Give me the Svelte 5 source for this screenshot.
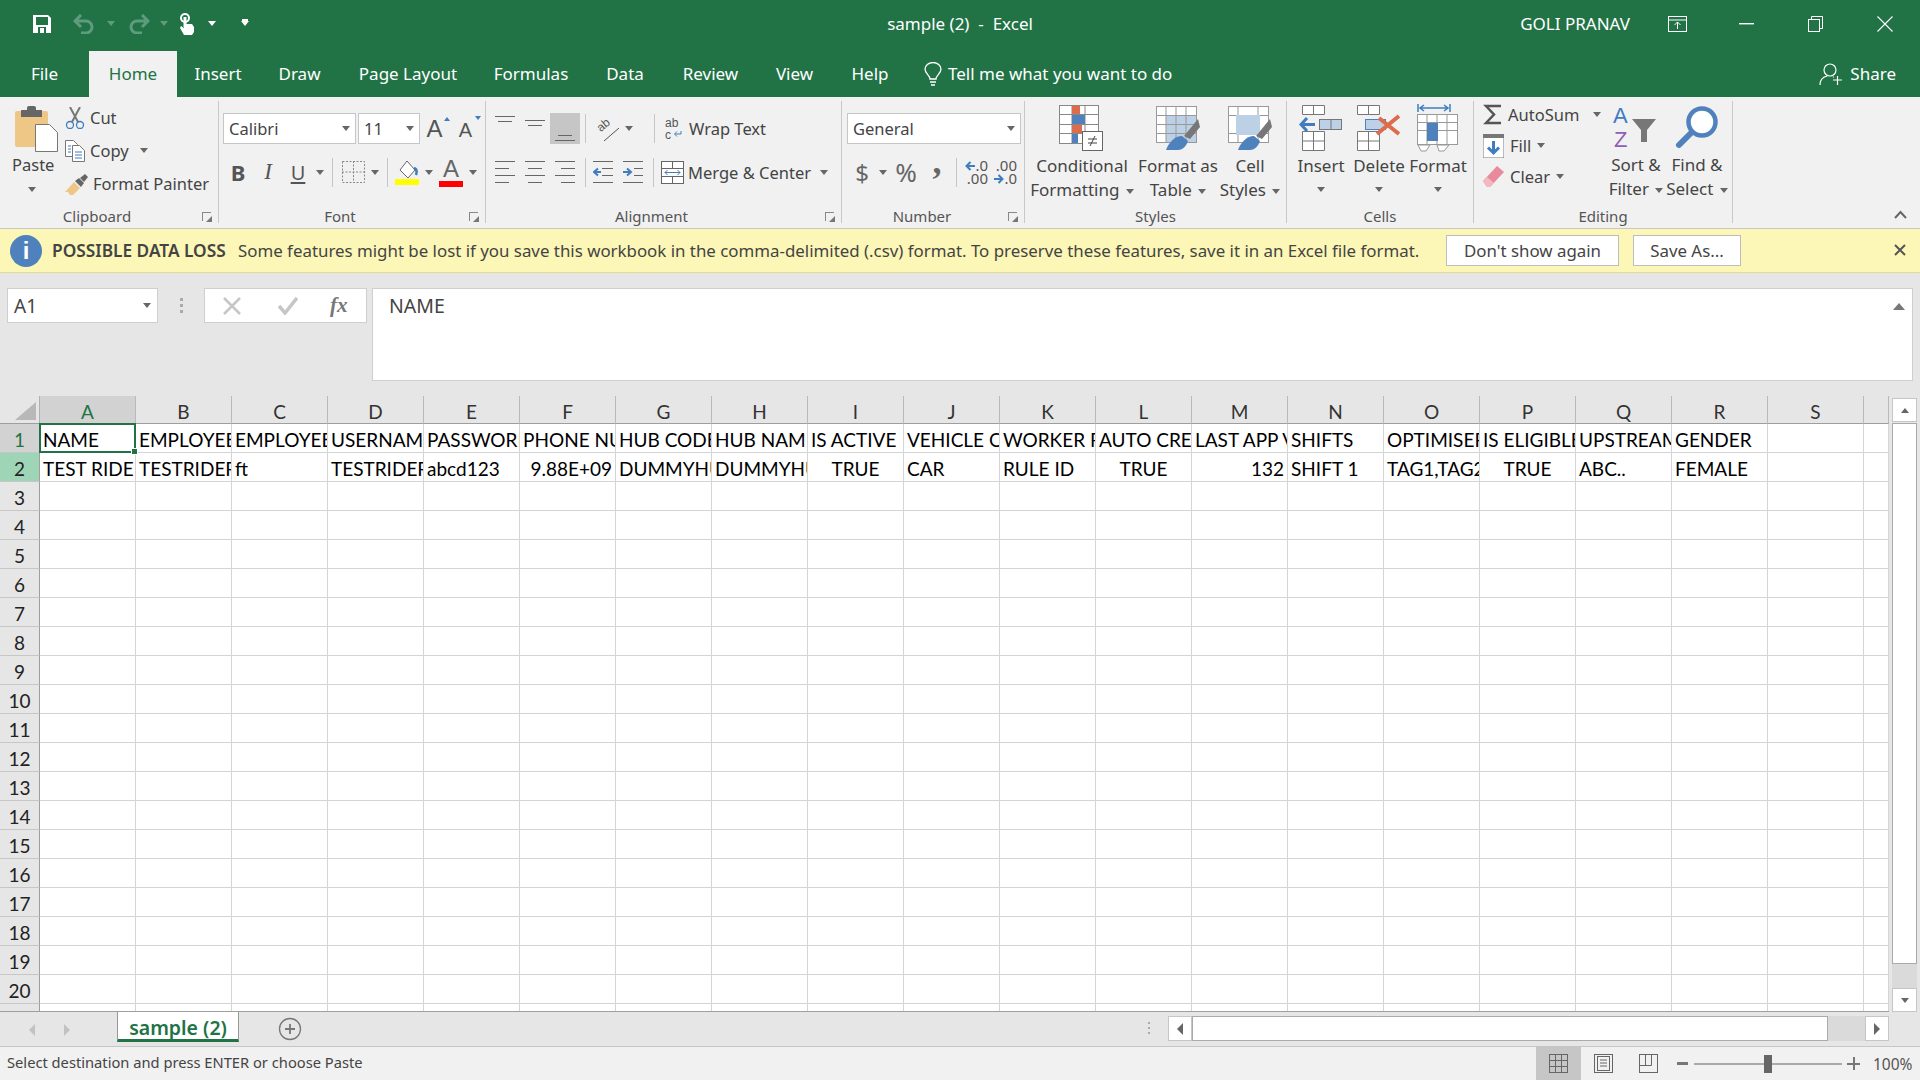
<script>
  const letters = 'ABCDEFGHIJKLMNOPQRS'.split('')
  const header = ['NAME', 'EMPLOYEE ID', 'EMPLOYEE', 'USERNAME', 'PASSWORD', 'PHONE NUMBER', 'HUB CODE', 'HUB NAME', 'IS ACTIVE', 'VEHICLE CATEGORY', 'WORKER RULE', 'AUTO CREATE', 'LAST APP VERSION', 'SHIFTS', 'OPTIMISER TAGS', 'IS ELIGIBLE', 'UPSTREAM', 'GENDER', '']
  const second = ['TEST RIDER', 'TESTRIDER01', 'ft', 'TESTRIDER01', 'abcd123', '9.88E+09', 'DUMMYHUB', 'DUMMYHUB', 'TRUE', 'CAR', 'RULE ID', 'TRUE', '132', 'SHIFT 1', 'TAG1,TAG2', 'TRUE', 'ABC..', 'FEMALE', '']
  const alignOf = { 5: 'right', 8: 'center', 11: 'center', 12: 'right', 15: 'center' }
  const rowNumbers = Array.from({ length: 21 }, (_, i) => i + 1)

  function cellValue(row, col) {
    if (row === 1) return header[col]
    if (row === 2) return second[col]
    return ''
  }
</script>

<div class="app">
  <header class="titlebar">
    <div class="qat">
      <svg class="i-save" width="20" height="20" viewBox="0 0 20 20"><path d="M1 1h15l3 3v15H1z" fill="#fff"/><rect x="4" y="3" width="12" height="8" fill="#217346"/><rect x="6" y="13" width="8" height="6" fill="#217346"/><rect x="8" y="14" width="4" height="5" fill="#fff"/></svg>
      <svg class="i-undo" width="22" height="20" viewBox="0 0 22 20" fill="none" stroke="#5f9c7e" stroke-width="3"><path d="M3 7h10a6 6 0 0 1 0 12H8M8 1L2 7l6 6"/></svg>
      <span class="caret dim c-undo"></span>
      <svg class="i-redo" width="22" height="20" viewBox="0 0 22 20" fill="none" stroke="#5f9c7e" stroke-width="3"><path d="M19 7H9a6 6 0 0 0 0 12h5M14 1l6 6-6 6"/></svg>
      <span class="caret dim c-redo"></span>
      <svg class="i-touch" width="17" height="22" viewBox="0 0 17 22" fill="#fff"><circle cx="7" cy="5" r="4" fill="none" stroke="#fff" stroke-width="2"/><rect x="5.500" y="4" width="3" height="10"/><path d="M6 9h2v2h6l2 3v5l-2 3H6l-4-7 1-2 3 2z"/></svg>
      <span class="caret white c-touch"></span>
      <span class="qat-more"></span>
    </div>
    <div class="doc-title">sample (2)&nbsp; -&nbsp; Excel</div>
    <div class="win">
      <span class="user">GOLI PRANAV</span>
      <svg class="w-ribbon" width="19" height="16" viewBox="0 0 19 16" fill="none" stroke="#fff"><rect x=".5" y=".5" width="18" height="15"/><path d="M1 4h17M9.5 13V6M6.5 9l3-3 3 3"/></svg>
      <svg class="w-min" width="15" height="2" viewBox="0 0 15 2"><rect width="15" height="1.4" fill="#fff"/></svg>
      <svg class="w-max" width="15" height="16" viewBox="0 0 15 16" fill="none" stroke="#fff"><rect x=".5" y="3.5" width="11" height="12"/><path d="M3.5 3V.5h11v12H12"/></svg>
      <svg class="w-close" width="16" height="16" viewBox="0 0 16 16" stroke="#fff" stroke-width="1.1"><path d="M.5.5l15 15M15.500.5l-15 15"/></svg>
    </div>
  </header>

  <nav class="tabs">
    <span class="tab t-file">File</span>
    <span class="tab t-home active">Home</span>
    <span class="tab t-insert">Insert</span>
    <span class="tab t-draw">Draw</span>
    <span class="tab t-layout">Page Layout</span>
    <span class="tab t-formulas">Formulas</span>
    <span class="tab t-data">Data</span>
    <span class="tab t-review">Review</span>
    <span class="tab t-view">View</span>
    <span class="tab t-help">Help</span>
    <svg class="bulb" width="18" height="24" viewBox="0 0 18 24" fill="none" stroke="#fff" stroke-width="1.3"><path d="M6 17c0-4-5-5-5-10a8 6.500 0 0 1 16 0c0 5-5 6-5 10z"/><path d="M6 20h6M7 23h4"/></svg>
    <span class="tell">Tell me what you want to do</span>
    <svg class="person" width="24" height="23" viewBox="0 0 24 23" fill="none" stroke="#fff" stroke-width="1.2"><circle cx="11" cy="7" r="6"/><path d="M1 22c0-5 3-8 7-9M14 14h1M14 17h9M18.500 13v9"/></svg>
    <span class="share">Share</span>
  </nav>

  <section class="ribbon">
    <div class="group g-clip">
      <div class="body clip-body">
        <div class="paste">
          <svg width="43" height="46" viewBox="0 0 43 46"><rect y="5" width="33" height="36" rx="2" fill="#eec786"/><rect x="6" y="4" width="21" height="7" fill="#666"/><rect x="12" y="0" width="9" height="6" rx="2" fill="#666"/><path d="M20.500 18.500h14l8 8v19h-22z" fill="#fff" stroke="#777"/></svg>
          <span class="paste-text">Paste</span>
          <span class="caret"></span>
        </div>
        <div class="clip-list">
          <div class="clip-item">
            <svg width="20" height="22" viewBox="0 0 20 22" fill="none"><path d="M5 0l8 15M15 0L7 15" stroke="#777" stroke-width="2"/><circle cx="5" cy="18" r="3.500" stroke="#3f7cc0" stroke-width="1.300"/><circle cx="15" cy="18" r="3.500" stroke="#3f7cc0" stroke-width="1.300"/></svg>
            <span>Cut</span>
          </div>
          <div class="clip-item">
            <svg width="20" height="22" viewBox="0 0 20 22" fill="#fff" stroke="#777"><path d="M.5.500h8l4 4v12H.5z"/><path d="M7.500 5.500h7l5 5v11h-12z"/><path d="M10 12h7M10 15h7M10 18h7" stroke="#3f7cc0"/><path d="M3 6h3M3 9h3M3 12h3" stroke="#3f7cc0"/></svg>
            <span>Copy</span>
            <span class="caret copy-caret"></span>
          </div>
          <div class="clip-item">
            <svg width="23" height="22" viewBox="0 0 23 22"><path d="M9 9l6 6-7 7H5l-2-3-3 0z" fill="#eec786"/><path d="M10 8l4-3 5 5-3 4zM15 5l5-4 3 3-4 5z" fill="#666"/></svg>
            <span>Format Painter</span>
          </div>
        </div>
      </div>
      <div class="glabel">Clipboard<span class="launch"></span></div>
    </div>

    <div class="group g-font">
      <div class="body">
        <div class="rrow row-a">
          <span class="combo w-font">Calibri<span class="caret"></span></span>
          <span class="combo w-size">11<span class="caret"></span></span>
          <span class="grow-a big">A<i class="tri up"></i></span>
          <span class="grow-a small">A<i class="tri down"></i></span>
        </div>
        <div class="rrow row-b">
          <span class="tb w30 fb">B</span>
          <span class="tb w30 fi">I</span>
          <span class="tb w30 fu">U</span>
          <span class="tb w13"><span class="caret"></span></span>
          <span class="vsep s1"></span>
          <span class="tb w30">
            <svg width="23" height="22" viewBox="0 0 23 22" fill="none" stroke="#888" stroke-dasharray="2 1.500"><rect x=".5" y=".5" width="22" height="21"/><path d="M11.500 0v22M0 11h23"/></svg>
          </span>
          <span class="tb w13"><span class="caret"></span></span>
          <span class="vsep s2"></span>
          <span class="tb w32">
            <svg width="24" height="25" viewBox="0 0 24 25"><path d="M12 1l8 9-7 8-8-8z" fill="#fff" stroke="#666"/><path d="M19 8c3 1 3 4 2 7" stroke="#3f7cc0" stroke-width="2.500" fill="none"/><rect y="19" width="24" height="6" fill="#ff0"/></svg>
          </span>
          <span class="tb w12"><span class="caret"></span></span>
          <span class="tb w32 fcolor">A<i></i></span>
          <span class="tb w12"><span class="caret"></span></span>
        </div>
      </div>
      <div class="glabel">Font<span class="launch"></span></div>
    </div>

    <div class="group g-align">
      <div class="body">
        <div class="rrow row-a">
          <span class="tb w30 al">
            <svg width="20" height="14" viewBox="0 0 20 14" stroke="#666"><path d="M0 .5h20M3 5.500h14"/></svg>
          </span>
          <span class="tb w30 al">
            <svg width="20" height="14" viewBox="0 0 20 14" stroke="#666"><path d="M0 4.500h20M3 9.500h14"/></svg>
          </span>
          <span class="tb w30 sel">
            <svg width="20" height="14" viewBox="0 0 20 14" stroke="#666"><path d="M3 8.500h14M0 13.500h20"/></svg>
          </span>
          <span class="vsep s3"></span>
          <span class="tb w30 orient">
            <svg width="24" height="26" viewBox="0 0 24 26" fill="none" stroke="#555"><path d="M8 25L23 12"/><text x="1" y="14" font-size="12" fill="#555" stroke="none" font-family="Liberation Sans" transform="rotate(-40 6 10)">ab</text></svg>
          </span>
          <span class="tb w12"><span class="caret"></span></span>
          <span class="vsep s4"></span>
          <svg class="i-wrap" width="19" height="24" viewBox="0 0 19 24"><text x="0" y="10" font-size="12" fill="#555" font-family="Liberation Sans">ab</text><text x="0" y="22" font-size="12" fill="#555" font-family="Liberation Sans">c</text><path d="M16 14v3h-6M12 14.500l-2.500 2.500 2.500 2.500" fill="none" stroke="#3f7cc0"/></svg>
          <span class="wide">Wrap Text</span>
        </div>
        <div class="rrow row-b">
          {#each [0, 3, 6] as offset}
            <span class="tb w30">
              <svg width="20" height="22" viewBox="0 0 20 22" stroke="#666"><path d="M0 .5h20M{offset} 7.500h14M0 14.500h20M{offset} 21.500h14"/></svg>
            </span>
          {/each}
          <span class="vsep s3"></span>
          <svg class="i-ind" width="20" height="22" viewBox="0 0 20 22" fill="none" stroke="#666"><path d="M0 .5h20M9 7.500h11M9 14.500h11M0 21.500h20"/><path d="M8 11H2M5 7.500L1 11l4 3.500" stroke="#3f7cc0" stroke-width="2"/></svg>
          <svg class="i-ind2" width="20" height="22" viewBox="0 0 20 22" fill="none" stroke="#666"><path d="M0 .5h20M11 7.500h9M11 14.500h9M0 21.500h20"/><path d="M0 11h7M4 7.500L8 11l-4 3.500" stroke="#3f7cc0" stroke-width="2"/></svg>
          <span class="vsep s5"></span>
          <svg class="i-merge" width="23" height="23" viewBox="0 0 23 23" fill="#fff" stroke="#666"><rect x=".5" y=".5" width="22" height="22"/><path d="M0 7.500h23M0 15.500h23M11.500 0v7M11.500 16v7"/><path d="M4 11.500h15M6.500 9L4 11.500 6.500 14M16.500 9l2.500 2.500-2.500 2.500" stroke="#3f7cc0"/></svg>
          <span class="wide">Merge &amp; Center</span>
          <span class="caret merge-caret"></span>
        </div>
      </div>
      <div class="glabel">Alignment<span class="launch"></span></div>
    </div>

    <div class="group g-num">
      <div class="body">
        <div class="rrow row-a">
          <span class="combo w-general">General<span class="caret"></span></span>
        </div>
        <div class="rrow row-b">
          <span class="num dollar">$</span>
          <span class="tb w13"><span class="caret"></span></span>
          <span class="num pct">%</span>
          <span class="num comma">,</span>
          <span class="vsep s6"></span>
          <span class="dec">
            <span class="decl"><svg width="10" height="10" viewBox="0 0 10 10" fill="none" stroke="#3f7cc0" stroke-width="2"><path d="M10 5H2M5.500 1L1.500 5l4 4"/></svg>.0</span>
            <span>.00</span>
          </span>
          <span class="dec second">
            <span>.00</span>
            <span class="decl"><svg width="10" height="10" viewBox="0 0 10 10" fill="none" stroke="#3f7cc0" stroke-width="2"><path d="M0 5h8M4.500 1l4 4-4 4"/></svg>.0</span>
          </span>
        </div>
      </div>
      <div class="glabel">Number<span class="launch"></span></div>
    </div>

    <div class="group g-styles">
      <div class="body big-row">
        <div class="bigbtn w-cond">
          <svg class="icon" width="46" height="46" viewBox="0 0 46 46" fill="#fff" stroke="#888"><rect x=".5" y=".5" width="39" height="38"/><path d="M0 9.500h40M0 19.500h40M0 28.500h40M13 0v39M26 0v39"/><rect x="13" y="1" width="8" height="8" fill="#dd6b4c" stroke="none"/><rect x="13" y="10" width="13" height="9" fill="#4f81bd" stroke="none"/><rect x="13" y="20" width="10" height="8" fill="#dd6b4c" stroke="none"/><rect x="13" y="29" width="6" height="9" fill="#4f81bd" stroke="none"/><rect x="23.500" y="26.500" width="20" height="19" fill="#fff" stroke="#666"/><path d="M29 34h9M29 38h9M36 31l-5 10" stroke="#444"/></svg>
          <span class="l2">Conditional</span>
          <span class="l2">Formatting <i class="caret"></i></span>
        </div>
        <div class="bigbtn w-ftable">
          <svg class="icon" width="44" height="44" viewBox="0 0 44 44" fill="#fff" stroke="#999"><rect x=".5" y=".5" width="40" height="36"/><rect x="10" y="9" width="30" height="27" fill="#bdd1e6" stroke="none"/><path d="M0 9.500h41M0 18.500h41M0 27.500h41M10 0v37M20 0v37M30 0v37"/><path d="M28 30l14-17 2 8-10 12z" fill="#777" stroke="none"/><path d="M10 44c2-6 8-14 16-14l6 5c-2 6-6 9-10 9z" fill="#4f81bd" stroke="none"/></svg>
          <span class="l2">Format as</span>
          <span class="l2">Table <i class="caret"></i></span>
        </div>
        <div class="bigbtn w-cstyle">
          <svg class="icon" width="44" height="44" viewBox="0 0 44 44" fill="#fff" stroke="#999"><rect x=".5" y=".5" width="40" height="36"/><path d="M0 9.500h41M0 27.500h41M10 0v37M30 0v37"/><rect x="8" y="9" width="24" height="20" fill="#bdd1e6" stroke="none"/><path d="M28 30l14-17 2 8-10 12z" fill="#777" stroke="none"/><path d="M10 44c2-6 8-14 16-14l6 5c-2 6-6 9-10 9z" fill="#4f81bd" stroke="none"/></svg>
          <span class="l2">Cell</span>
          <span class="l2">Styles <i class="caret"></i></span>
        </div>
      </div>
      <div class="glabel">Styles</div>
    </div>

    <div class="group g-cells">
      <div class="body big-row">
        <div class="bigbtn w-insert">
          <svg class="icon" width="44" height="46" viewBox="0 0 44 46" fill="#fff" stroke="#777"><path d="M3.500.5h22v9h-22zM14.500 0v9M3.500 26.500h22v19h-22zM14.500 26v19M3 36h23"/><rect x="20.500" y="14.500" width="22" height="10" fill="#bdd1e6"/><path d="M32 15v9"/><path d="M16 19.500H2M8 13l-6 6.500 6 6.500" fill="none" stroke="#3f7cc0" stroke-width="3"/></svg>
          <span class="l2">Insert</span>
          <i class="caret"></i>
        </div>
        <div class="bigbtn w-delete">
          <svg class="icon" width="44" height="46" viewBox="0 0 44 46" fill="#fff" stroke="#777"><path d="M.5.500h22v9H.5zM11.500 0v9M.5 26.500h22v19H.5zM11.500 26v19M0 36h23"/><rect x="8.500" y="14.500" width="20" height="10" fill="#bdd1e6" stroke="#4f81bd"/><path d="M22 13l20 16M42 11L20 29" fill="none" stroke="#dd6b4c" stroke-width="4"/></svg>
          <span class="l2">Delete</span>
          <i class="caret"></i>
        </div>
        <div class="bigbtn w-format">
          <svg class="icon" width="42" height="48" viewBox="0 0 42 48" fill="#fff" stroke="#999"><path d="M1 0v8M33 0v8M3 4h28M7 1L3 4l4 3M27 1l4 3-4 3" fill="none" stroke="#3f7cc0" stroke-width="1.500"/><rect x=".5" y="10.500" width="40" height="30"/><path d="M0 18.500h41M0 26.500h41M10 10v31M20 10v31M30 10v31"/><rect x="10" y="19" width="11" height="18" fill="#4f81bd" stroke="none"/><path d="M1 41h12l-4 6H4zM20 41h12l-5 6h-5z"/></svg>
          <span class="l2">Format</span>
          <i class="caret"></i>
        </div>
      </div>
      <div class="glabel">Cells</div>
    </div>

    <div class="group g-edit">
      <div class="body edit-body">
        <div class="edit-list">
          <div class="edit-item">
            <svg width="19" height="21" viewBox="0 0 19 21" fill="none" stroke="#555" stroke-width="2.500"><path d="M18 2H3l8 8.500L3 19h15"/></svg>
            <span class="auto">AutoSum</span>
            <i class="caret auto-caret"></i>
          </div>
          <div class="edit-item">
            <svg width="21" height="24" viewBox="0 0 21 24"><rect width="21" height="24" fill="#fff" stroke="#777"/><rect width="21" height="4" fill="#777"/><path d="M10.500 7v12M5 13.500l5.500 5.500 5.500-5.500" fill="none" stroke="#3f7cc0" stroke-width="3"/></svg>
            <span>Fill</span>
            <i class="caret"></i>
          </div>
          <div class="edit-item">
            <svg width="21" height="21" viewBox="0 0 21 21"><path d="M0 15L14 0l7 6L7 21H4z" fill="#e98a9c"/><path d="M0 15l4-4 7 6-4 4H4z" fill="#f3b8c2"/></svg>
            <span>Clear</span>
            <i class="caret"></i>
          </div>
        </div>
        <div class="bigbtn w-sort">
          <svg class="icon" width="46" height="42" viewBox="0 0 46 42"><text x="0" y="17" font-size="22" fill="#3f7cc0" font-family="Liberation Sans">A</text><text x="1" y="41" font-size="22" fill="#8e5fb8" font-family="Liberation Sans">Z</text><path d="M19 13h24L34 24v12h-6V24z" fill="#777"/></svg>
          <span class="l2">Sort &amp;</span>
          <span class="l2">Filter <i class="caret"></i></span>
        </div>
        <div class="bigbtn w-find">
          <svg class="icon" width="42" height="42" viewBox="0 0 42 42" fill="none" stroke="#4f81bd"><circle cx="26" cy="16" r="13.500" stroke-width="4.500" fill="#fff"/><path d="M15 27L3 39" stroke-width="6" stroke-linecap="round"/></svg>
          <span class="l2">Find &amp;</span>
          <span class="l2">Select <i class="caret"></i></span>
        </div>
      </div>
      <div class="glabel">Editing</div>
    </div>

    <svg class="collapse" width="13" height="9" viewBox="0 0 13 9" fill="none" stroke="#666" stroke-width="2"><path d="M1 8l5.500-6L12 8"/></svg>
  </section>

  <div class="msgbar">
    <span class="info">i</span>
    <b>POSSIBLE DATA LOSS</b>
    <span class="msg">Some features might be lost if you save this workbook in the comma-delimited (.csv) format. To preserve these features, save it in an Excel file format.</span>
    <button class="btn-dont">Don't show again</button>
    <button class="btn-save">Save As...</button>
    <svg class="msg-close" width="12" height="12" viewBox="0 0 12 12" stroke="#555" stroke-width="2"><path d="M1 1l10 10M11 1L1 11"/></svg>
  </div>

  <div class="formula">
    <div class="namebox">A1<span class="caret"></span></div>
    <div class="dots"><i></i><i></i><i></i></div>
    <div class="fxbox">
      <svg width="18" height="18" viewBox="0 0 18 18" stroke="#c6c6c6" stroke-width="2.500"><path d="M1 1l16 16M17 1L1 17"/></svg>
      <svg width="20" height="18" viewBox="0 0 20 18" fill="none" stroke="#c6c6c6" stroke-width="3.500"><path d="M1 9l6 7L19 1"/></svg>
      <span class="fx">fx</span>
    </div>
    <div class="finput">NAME
      <svg class="f-up" width="12" height="7" viewBox="0 0 12 7"><path d="M0 7l6-7 6 7z" fill="#777"/></svg>
    </div>
  </div>

  <div class="sheet">
    <div class="grid">
      <div class="corner">
        <svg width="21" height="18" viewBox="0 0 21 18"><path d="M21 0v18H0z" fill="#b8b8b8"/></svg>
      </div>
      {#each letters as l, i}
        <div class="ch" class:on={i === 0}>{l}</div>
      {/each}
      <div class="ch"></div>
      {#each rowNumbers as r}
        <div class="rh" class:on={r === 1} class:paste-row={r === 2}>{r < 21 ? r : ''}</div>
        {#each letters as l, c}
          <div class="cell {r === 2 && alignOf[c] ? alignOf[c] : ''}">
            <span class="val">{cellValue(r, c)}</span>
            {#if r === 1 && c === 0}
              <span class="selbox"></span>
            {/if}
          </div>
        {/each}
        <div class="cell"></div>
      {/each}
    </div>
    <div class="vscroll">
      <span class="sbtn"><i class="caret up-c"></i></span>
      <span class="thumb"></span>
      <span class="sbtn down"><i class="caret"></i></span>
    </div>
  </div>

  <div class="tabbar">
    <span class="nav-l"></span>
    <span class="nav-r"></span>
    <span class="sheet-tab">sample (2)</span>
    <svg class="addsheet" width="24" height="24" viewBox="0 0 24 24" fill="none" stroke="#777" stroke-width="1.300"><circle cx="12" cy="12" r="10.500"/><path d="M12 7v10M7 12h10" stroke-width="1.800"/></svg>
    <div class="dots small"><i></i><i></i><i></i></div>
    <div class="hscroll">
      <span class="hbtn"><i class="arrow left"></i></span>
      <span class="hthumb"></span>
      <span class="hbtn end"><i class="arrow right"></i></span>
    </div>
  </div>

  <footer class="status">
    <span>Select destination and press ENTER or choose Paste</span>
    <div class="views">
      <span class="view on">
        <svg width="19" height="19" viewBox="0 0 19 19" fill="none" stroke="#666"><rect x=".5" y=".5" width="18" height="18"/><path d="M0 6.500h19M0 12.500h19M6.500 0v19M12.500 0v19"/></svg>
      </span>
      <span class="view">
        <svg width="19" height="19" viewBox="0 0 19 19" fill="none" stroke="#666"><rect x=".5" y=".5" width="18" height="18"/><rect x="3.500" y="2.500" width="12" height="14"/><path d="M6 6h7M6 9h7M6 12h7"/></svg>
      </span>
      <span class="view">
        <svg width="19" height="19" viewBox="0 0 19 19" fill="none" stroke="#666"><rect x=".5" y=".5" width="18" height="18"/><path d="M0 11.500h12.500V0M6.500 0v11"/></svg>
      </span>
    </div>
    <div class="zoom">
      <span class="z-minus"></span>
      <span class="z-track"><i></i></span>
      <span class="z-plus"></span>
      <span class="z-pct">100%</span>
    </div>
  </footer>
</div>

<style>
  :global(body) {
    margin: 0;
    background: #e6e6e6;
  }
  .app {
    width: 1920px;
    height: 1080px;
    overflow: hidden;
    display: flex;
    flex-direction: column;
    font-family: 'Noto Sans', sans-serif;
    font-size: 16.5px;
    color: #444;
    --green: #217346;
  }
  svg {
    display: block;
    flex: none;
  }
  .caret {
    display: inline-block;
    width: 0;
    height: 0;
    border: 4px solid transparent;
    border-top: 5px solid #666;
    border-bottom: 0;
    flex: none;
  }
  .caret.dim {
    border-top-color: #5f9c7e;
  }
  .caret.white {
    border-top-color: #fff;
  }

  /* title bar */
  .titlebar {
    height: 51px;
    box-sizing: border-box;
    padding-bottom: 4px;
    background: var(--green);
    color: #fff;
    display: grid;
    grid-template-columns: 1fr auto 1fr;
    align-items: center;
    font-size: 17px;
  }
  .qat {
    display: flex;
    align-items: center;
    padding-left: 32px;
  }
  .i-undo {
    margin-left: 21px;
  }
  .c-undo {
    margin-left: 12px;
  }
  .i-redo {
    margin-left: 13px;
  }
  .c-redo {
    margin-left: 10px;
  }
  .i-touch {
    margin-left: 10px;
  }
  .c-touch {
    margin-left: 13px;
  }
  .qat-more {
    margin-left: 25px;
    width: 0;
    height: 0;
    border: 4px solid transparent;
    border-top: 5px solid #fff;
    border-bottom: 0;
    box-shadow: 0 -3px 0 -1px #fff;
  }
  .doc-title {
    white-space: nowrap;
  }
  .win {
    display: flex;
    align-items: center;
    justify-content: flex-end;
    padding-right: 27px;
  }
  .user {
    margin-right: 38px;
  }
  .w-min {
    margin-left: 52px;
  }
  .w-max {
    margin-left: 54px;
  }
  .w-close {
    margin-left: 54px;
  }

  /* tabs */
  .tabs {
    height: 46px;
    background: var(--green);
    color: #fff;
    display: flex;
    align-items: stretch;
    font-size: 17px;
  }
  .tab {
    display: flex;
    align-items: center;
    justify-content: center;
    padding-bottom: 2px;
    box-sizing: border-box;
  }
  .tab.active {
    background: #f1f1f1;
    color: var(--green);
  }
  .t-file { width: 89px; }
  .t-home { width: 88px; }
  .t-insert { width: 82px; }
  .t-draw { width: 81px; }
  .t-layout { width: 136px; }
  .t-formulas { width: 110px; }
  .t-data { width: 78px; }
  .t-review { width: 93px; }
  .t-view { width: 75px; }
  .t-help { width: 76px; }
  .bulb {
    align-self: center;
    margin-left: 16px;
  }
  .tell {
    align-self: center;
    margin: 0 0 2px 6px;
  }
  .person {
    align-self: center;
    margin-left: auto;
  }
  .share {
    align-self: center;
    margin: 0 24px 2px 7px;
  }

  /* ribbon */
  .ribbon {
    height: 132px;
    box-sizing: border-box;
    background: #f1f1f1;
    border-bottom: 1px solid #c6c6c6;
    padding: 4px 0 5px;
    display: flex;
    position: relative;
  }
  .group {
    box-sizing: border-box;
    border-right: 1px solid #c8c8c8;
    display: flex;
    flex-direction: column;
  }
  .g-clip { width: 219px; }
  .g-font { width: 267px; }
  .g-align { width: 356px; }
  .g-num { width: 183px; }
  .g-styles { width: 262px; }
  .g-cells { width: 187px; }
  .g-edit { width: 259px; }
  .body {
    flex: 1;
    min-height: 0;
  }
  .glabel {
    height: 22px;
    font-size: 15px;
    line-height: 22px;
    text-align: center;
    position: relative;
    top: 4px;
    margin-top: -4px;
    color: #555;
  }
  .g-clip .glabel,
  .g-font .glabel {
    padding-right: 24px;
  }
  .g-align .glabel {
    padding-right: 24px;
  }
  .g-num .glabel {
    padding-right: 22px;
  }
  .launch {
    position: absolute;
    right: 7px;
    top: 7px;
    width: 8px;
    height: 8px;
    border-left: 1px solid #888;
    border-top: 1px solid #888;
  }
  .launch::after {
    content: '';
    position: absolute;
    right: -1px;
    bottom: -1px;
    border: 3px solid #777;
    border-left-color: transparent;
    border-top-color: transparent;
  }

  /* clipboard */
  .clip-body {
    display: flex;
  }
  .paste {
    width: 65px;
    box-sizing: border-box;
    padding: 5px 0 0 15px;
    display: flex;
    flex-direction: column;
    align-items: flex-start;
  }
  .paste-text {
    width: 42px;
    margin-left: -3px;
    text-align: center;
    height: 26px;
    line-height: 26px;
  }
  .paste .caret {
    margin: 9px 0 0 13px;
  }
  .clip-item {
    height: 33px;
    display: flex;
    align-items: center;
    gap: 5px;
    white-space: nowrap;
  }
  .copy-caret {
    margin-left: 6px;
  }

  /* shared ribbon rows */
  .rrow {
    display: flex;
    align-items: center;
  }
  .row-a {
    height: 31px;
    margin-top: 12px;
  }
  .row-b {
    height: 30px;
    margin-top: 13px;
  }
  .g-font .rrow {
    padding-left: 4px;
  }
  .combo {
    box-sizing: border-box;
    height: 31px;
    background: #fff;
    border: 1px solid #c6c6c6;
    display: flex;
    align-items: center;
    justify-content: space-between;
    padding: 0 5px;
    color: #444;
  }
  .w-font { width: 133px; margin-right: 2px; }
  .w-size { width: 62px; }
  .w-general { width: 174px; margin-left: 5px; }
  .grow-a {
    position: relative;
    width: 31px;
    text-align: center;
    color: #555;
    font-family: 'Liberation Sans', sans-serif;
  }
  .grow-a.big {
    font-size: 24px;
    margin-left: -1px;
  }
  .grow-a.small {
    font-size: 20px;
    padding-top: 4px;
  }
  .tri {
    position: absolute;
    right: 0;
    border: 3.500px solid transparent;
  }
  .tri.up {
    top: 2px;
    border-bottom: 4px solid #3f7cc0;
    border-top: 0;
  }
  .tri.down {
    top: 1px;
    border-top: 4px solid #3f7cc0;
    border-bottom: 0;
  }
  .tb {
    display: flex;
    align-items: center;
    justify-content: center;
    height: 31px;
    color: #555;
    flex: none;
  }
  .w30 { width: 30px; }
  .w32 { width: 32px; }
  .w13 { width: 13px; }
  .w12 { width: 12px; }
  .fb {
    font: bold 22px 'Noto Sans', sans-serif;
  }
  .fi {
    font: italic 23px 'Liberation Serif', serif;
  }
  .fu {
    font: 20px 'Noto Sans', sans-serif;
    text-decoration: underline;
    text-underline-offset: 2px;
  }
  .fcolor {
    flex-direction: column;
    font: 24px/24px 'Liberation Sans', sans-serif;
    color: #666;
  }
  .fcolor i {
    width: 24px;
    height: 6px;
    background: #f00;
  }
  .vsep {
    width: 1px;
    height: 29px;
    background: #c6c6c6;
    flex: none;
  }
  .s1 { margin: 0 5px 0 6px; }
  .s2 { margin: 0 3px 0 6px; }
  .s3 { margin: 0 7px 0 5px; }
  .s4 { margin: 0 10px 0 19px; }
  .s5 { margin: 0 7px 0 10px; }
  .s6 { margin: 0 7px 0 12px; }
  .g-align .rrow > .tb:first-child {
    margin-left: 4px;
  }
  .sel {
    background: #c6c6c6;
  }
  .al svg,
  .sel svg {
    align-self: flex-start;
    margin-top: 3px;
  }
  .sel svg {
    margin-top: 14px;
    height: 14px;
  }
  .i-wrap {
    margin-right: 5px;
  }
  .wide {
    white-space: nowrap;
  }
  .i-ind {
    margin-right: 10px;
  }
  .i-merge {
    margin-right: 4px;
  }
  .merge-caret {
    margin-left: 9px;
  }
  .g-num .row-b {
    padding-left: 12px;
    color: #666;
  }
  .num {
    flex: none;
    text-align: center;
    color: #666;
  }
  .dollar {
    width: 16px;
    font-size: 24px;
    margin-right: 6px;
  }
  .pct {
    width: 24px;
    font-size: 26px;
    margin-left: 5px;
  }
  .comma {
    width: 14px;
    font: bold 36px/20px 'Liberation Serif', serif;
    margin: -22px 0 0 12px;
  }
  .dec {
    display: flex;
    flex-direction: column;
    align-items: flex-end;
    font-size: 15px;
    line-height: 13px;
    width: 24px;
    color: #555;
  }
  .decl {
    display: flex;
    align-items: center;
  }
  .dec.second {
    width: 21px;
    margin-left: 8px;
  }

  /* large buttons */
  .big-row {
    display: flex;
    padding-top: 1px;
  }
  .bigbtn {
    display: flex;
    flex-direction: column;
    align-items: center;
    flex: none;
    white-space: nowrap;
    font-size: 17px;
  }
  .bigbtn .icon {
    height: 52px;
    margin-bottom: 0;
    overflow: visible;
  }
  .l2 {
    height: 24px;
    line-height: 24px;
  }
  .bigbtn > .caret {
    margin-top: 9px;
  }
  .l2 .caret {
    vertical-align: 2px;
    margin-left: 2px;
  }
  .w-cond { width: 114px; }
  .w-ftable { width: 78px; }
  .w-cstyle { width: 66px; }
  .w-insert { width: 66px; margin-left: 1px; }
  .w-delete { width: 50px; }
  .w-format { width: 68px; }

  /* editing */
  .edit-body {
    display: flex;
  }
  .edit-list {
    width: 135px;
    margin-top: -2px;
    padding: 0 0 0 9px;
    box-sizing: border-box;
  }
  .edit-item {
    height: 31px;
    display: flex;
    align-items: center;
    gap: 6px;
    white-space: nowrap;
  }
  .auto-caret {
    margin-left: 8px;
  }
  .w-sort {
    width: 54px;
  }
  .w-find {
    width: 64px;
    margin-left: 2px;
  }

  .collapse {
    position: absolute;
    right: 13px;
    bottom: 9px;
  }

  /* message bar */
  .msgbar {
    height: 44px;
    box-sizing: border-box;
    background: #fcf7b6;
    border-bottom: 1px solid #e4dc95;
    display: flex;
    align-items: center;
    position: relative;
    font-size: 16.88px;
  }
  .info {
    width: 32px;
    height: 32px;
    border-radius: 50%;
    background: #4f81bd;
    color: #fff;
    margin-left: 10px;
    text-align: center;
    font: bold 24px/32px 'Liberation Sans', sans-serif;
    flex: none;
  }
  .msgbar b {
    margin-left: 10px;
    width: 176px;
    flex: none;
    font-size: 17.3px;
    font-weight: 600;
    white-space: nowrap;
  }
  .msg {
    margin-left: 10px;
    white-space: nowrap;
    width: 1208px;
    flex: none;
  }
  .msgbar button {
    box-sizing: border-box;
    height: 31px;
    background: #fff;
    border: 1px solid #bdbdbd;
    font: inherit;
    color: #444;
    padding: 0;
  }
  .btn-dont {
    width: 173px;
  }
  .btn-save {
    width: 108px;
    margin-left: 14px;
  }
  .msg-close {
    position: absolute;
    right: 14px;
    top: 15px;
  }

  /* formula bar */
  .formula {
    height: 123px;
    box-sizing: border-box;
    background: #e6e6e6;
    padding: 15px 7px 15px 7px;
    display: flex;
    align-items: flex-start;
  }
  .namebox {
    box-sizing: border-box;
    width: 151px;
    height: 35px;
    background: #fff;
    border: 1px solid #cfcfcf;
    font-size: 19px;
    display: flex;
    align-items: center;
    justify-content: space-between;
    padding: 0 6px;
  }
  .dots {
    display: flex;
    flex-direction: column;
    gap: 3px;
    width: 46px;
    height: 35px;
    align-items: center;
    justify-content: center;
  }
  .dots i {
    width: 3px;
    height: 3px;
    background: #aaa;
  }
  .fxbox {
    box-sizing: border-box;
    width: 163px;
    height: 35px;
    background: #fff;
    border: 1px solid #cfcfcf;
    display: flex;
    align-items: center;
    padding-left: 18px;
    gap: 37px;
  }
  .fx {
    font: italic bold 21px 'Liberation Serif', serif;
    color: #777;
    margin-left: -5px;
  }
  .finput {
    box-sizing: border-box;
    margin-left: 5px;
    flex: 1;
    height: 93px;
    background: #fff;
    border: 1px solid #cfcfcf;
    font-size: 19.5px;
    padding: 3px 16px;
    position: relative;
  }
  .f-up {
    position: absolute;
    right: 7px;
    top: 14px;
  }

  /* sheet */
  .sheet {
    height: 616px;
    display: flex;
    background: #e6e6e6;
  }
  .grid {
    width: 1889px;
    box-sizing: border-box;
    height: 616px;
    overflow: hidden;
    display: grid;
    grid-template-columns: 40px repeat(19, 96px) 25px;
    grid-auto-rows: 29px;
    grid-template-rows: 28px;
    border-bottom: 1px solid #9e9e9e;
    font: 19px 'Lato', sans-serif;
    color: #000;
  }
  .corner {
    background: #e6e6e6;
    border-right: 1px solid #b0b0b0;
    border-bottom: 1px solid #9e9e9e;
    box-sizing: border-box;
    display: flex;
    justify-content: flex-end;
    align-items: flex-end;
    padding: 0 3px 3px 0;
  }
  .ch {
    box-sizing: border-box;
    background: #e6e6e6;
    border-right: 1px solid #b9b9b9;
    border-bottom: 1px solid #9e9e9e;
    text-align: center;
    line-height: 31px;
    color: #333;
  }
  .ch.on {
    background: #d2d2d2;
    color: var(--green);
  }
  .rh {
    box-sizing: border-box;
    background: #e6e6e6;
    border-right: 1px solid #9e9e9e;
    border-bottom: 1px solid #c6c6c6;
    text-align: center;
    line-height: 31px;
    color: #222;
  }
  .rh.on {
    background: #d2d2d2;
    color: var(--green);
  }
  .rh.paste-row {
    background: #9fd5b7;
  }
  .cell {
    box-sizing: border-box;
    background: #fff;
    border-right: 1px solid #d4d4d4;
    border-bottom: 1px solid #d4d4d4;
    position: relative;
  }
  .val {
    display: block;
    line-height: 31px;
    height: 28px;
    padding: 0 3px;
    white-space: nowrap;
    overflow: hidden;
  }
  .cell.right {
    text-align: right;
  }
  .cell.center {
    text-align: center;
  }
  .selbox {
    position: absolute;
    inset: -1px -1px -1px -1px;
    border: 2px solid var(--green);
    z-index: 2;
    pointer-events: none;
  }
  .selbox::after {
    content: '';
    position: absolute;
    right: -4px;
    bottom: -4px;
    width: 5px;
    height: 5px;
    background: var(--green);
    border: 1px solid #fff;
  }
  .vscroll {
    width: 31px;
    box-sizing: border-box;
    padding: 2px 3px 0;
    display: flex;
    flex-direction: column;
    align-items: stretch;
  }
  .sbtn {
    box-sizing: border-box;
    height: 24px;
    background: #fff;
    border: 1px solid #c6c6c6;
    display: flex;
    align-items: center;
    justify-content: center;
    flex: none;
  }
  .up-c {
    transform: rotate(180deg);
  }
  .thumb {
    box-sizing: border-box;
    height: 541px;
    margin-top: 1px;
    background: #fff;
    border: 1px solid #aaa;
    flex: none;
  }
  .sbtn.down {
    margin-top: 24px;
    box-shadow: 0 -24px 0 0 #dadada;
  }

  /* sheet tabs */
  .tabbar {
    height: 35px;
    box-sizing: border-box;
    background: #e6e6e6;
    border-bottom: 1px solid #c6c6c6;
    display: flex;
    position: relative;
  }
  .nav-l,
  .nav-r {
    width: 0;
    height: 0;
    border: 6px solid transparent;
    margin-top: 12px;
  }
  .nav-l {
    border-right: 6px solid #c2c2c2;
    border-left: 0;
    margin-left: 29px;
  }
  .nav-r {
    border-left: 6px solid #c2c2c2;
    border-right: 0;
    margin-left: 29px;
  }
  .sheet-tab {
    box-sizing: border-box;
    width: 122px;
    height: 30px;
    margin-left: 47px;
    background: #fff;
    border: 1px solid #999;
    border-top: 0;
    border-bottom: 3px solid var(--green);
    text-align: center;
    font-weight: 600;
    line-height: 31px;
    color: var(--green);
    font-size: 19.5px;
    white-space: nowrap;
  }
  .addsheet {
    margin: 5px 0 0 39px;
  }
  .dots.small {
    height: 32px;
    width: 24px;
    margin-left: 835px;
  }
  .dots.small i {
    width: 2px;
    height: 2px;
  }
  .hscroll {
    display: flex;
    margin: 4px 0 0 7px;
    width: 721px;
    height: 25px;
    background: #dadada;
  }
  .hbtn {
    box-sizing: border-box;
    width: 24px;
    height: 25px;
    background: #fff;
    border: 1px solid #c6c6c6;
    display: flex;
    align-items: center;
    justify-content: center;
    flex: none;
  }
  .hbtn.end {
    margin-left: auto;
  }
  .hthumb {
    box-sizing: border-box;
    width: 636px;
    background: #fff;
    border: 1px solid #aaa;
    flex: none;
  }
  .arrow {
    border: 6px solid transparent;
  }
  .arrow.left {
    border-right: 6px solid #666;
    border-left: 0;
  }
  .arrow.right {
    border-left: 6px solid #666;
    border-right: 0;
  }

  /* status bar */
  .status {
    flex: 1;
    background: #f1f1f1;
    display: flex;
    align-items: center;
    padding-left: 7px;
    font-size: 14.7px;
    color: #444;
  }
  .status > span {
    margin-top: -3px;
  }
  .views {
    display: flex;
    margin-left: auto;
    align-self: stretch;
  }
  .view {
    width: 45px;
    display: flex;
    align-items: center;
    justify-content: center;
  }
  .view.on {
    background: #c6c6c6;
  }
  .zoom {
    display: flex;
    align-items: center;
    width: 249px;
    padding-left: 6px;
    box-sizing: border-box;
  }
  .z-minus {
    width: 11px;
    height: 3px;
    background: #777;
  }
  .z-track {
    width: 148px;
    height: 2px;
    margin-left: 6px;
    background: #aaa;
    position: relative;
  }
  .z-track i {
    position: absolute;
    left: 70px;
    top: -8px;
    width: 8px;
    height: 18px;
    background: #666;
  }
  .z-plus {
    width: 13px;
    height: 13px;
    margin-left: 5px;
    background: linear-gradient(#777, #777) center / 13px 2px no-repeat,
      linear-gradient(#777, #777) center / 2px 13px no-repeat;
  }
  .z-pct {
    margin-left: 13px;
    font-size: 15.5px;
    color: #555;
  }
</style>
